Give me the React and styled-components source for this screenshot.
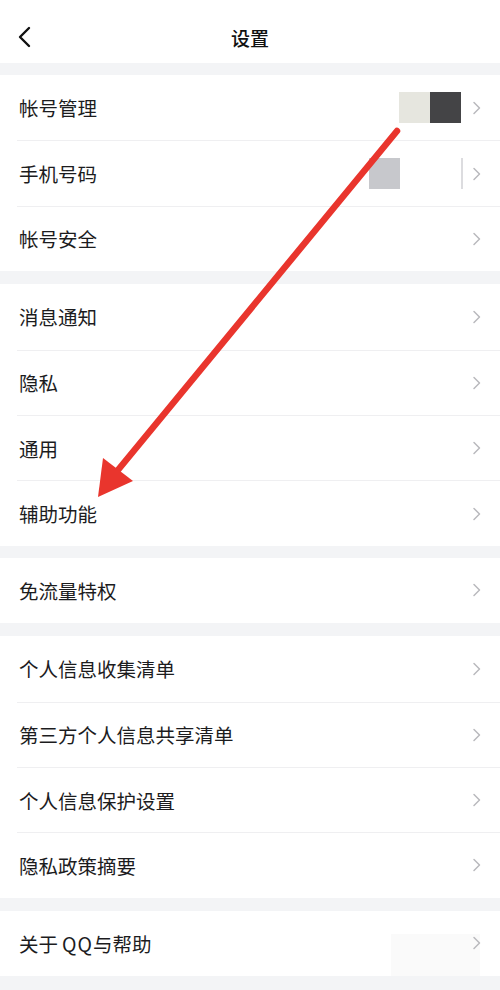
import React from 'react'
import styled, { createGlobalStyle } from 'styled-components'

const Global = createGlobalStyle`
  html, body { margin: 0; padding: 0; background: #f3f4f6; }
  body { font-family: "Noto Sans CJK SC", "Noto Sans", sans-serif; }
  * { box-sizing: border-box; }
`

const Page = styled.div`
  position: relative;
  width: 500px;
  height: 990px;
  overflow: hidden;
  background: #f3f4f6;
  display: flex;
  flex-direction: column;
`

const Header = styled.div`
  height: 63px;
  flex-shrink: 0;
  background: #fff;
  display: flex;
  align-items: center;
  justify-content: center;
  position: relative;
`

const Back = styled.div`
  position: absolute;
  left: 16px;
  top: 26px;
  width: 18px;
  height: 22px;
  display: flex;
`

const Title = styled.div`
  font-size: 19px;
  font-weight: 500;
  color: #111;
  margin-top: 11px;
`

const Group = styled.div`
  background: #fff;
  margin-top: ${p => p.gap || 12}px;
  flex-shrink: 0;
  display: flex;
  flex-direction: column;
`

const Row = styled.div`
  height: 65.4px;
  display: flex;
  align-items: center;
  padding: 0 19px;
  position: relative;
  & + & {
    border-top: 1px solid #efeff1;
  }
  & + &::before {
    content: '';
    position: absolute;
    left: 0;
    top: -1px;
    width: 17px;
    height: 1px;
    background: #fff;
  }
`

const Label = styled.div`
  flex: 1;
  font-size: 19.5px;
  color: #1c1c1e;
`

const Latin = styled.span`
  margin-left: 4px;
  letter-spacing: 1px;
`

const Right = styled.div`
  display: flex;
  align-items: center;
  align-self: stretch;
`

const Mask = styled.div`
  width: ${p => p.w}px;
  height: ${p => p.h || 31}px;
  background: ${p => p.color};
  margin-right: ${p => p.mr || 0}px;
  align-self: ${p => p.self || 'center'};
`

const Bar = styled.div`
  width: 2px;
  height: 31px;
  background: #dcdcdf;
  margin-right: 9px;
`

const Chevron = () => (
  <svg width="10" height="14" viewBox="0 0 10 14" style={{ marginRight: -1 }}>
    <polyline points="2,1.5 7.5,7 2,12.5" fill="none" stroke="#b9b9bd" strokeWidth="1.5" strokeLinecap="round" strokeLinejoin="round" />
  </svg>
)

const ArrowLayer = styled.svg`
  position: absolute;
  left: 0;
  top: 0;
  pointer-events: none;
`

function Item({ label, children }) {
  return (
    <Row>
      <Label>{label}</Label>
      <Right>
        {children}
        <Chevron />
      </Right>
    </Row>
  )
}

export default function App() {
  return (
    <Page>
      <Global />
      <Header>
        <Back>
          <svg width="18" height="22" viewBox="0 0 18 22">
            <polyline points="13,2 4,11 13,20" fill="none" stroke="#111" strokeWidth="2.4" strokeLinecap="round" strokeLinejoin="round" />
          </svg>
        </Back>
        <Title>设置</Title>
      </Header>

      <Group>
        <Item label="帐号管理">
          <Mask w={31} color="#e6e6df" />
          <Mask w={31} color="#444446" mr={11} />
        </Item>
        <Item label="手机号码">
          <Mask w={31} color="#c7c8cc" mr={61} />
          <Bar />
        </Item>
        <Item label="帐号安全" />
      </Group>

      <Group gap={13}>
        <Item label="消息通知" />
        <Item label="隐私" />
        <Item label="通用" />
        <Item label="辅助功能" />
      </Group>

      <Group gap={12}>
        <Item label="免流量特权" />
      </Group>

      <Group gap={13}>
        <Item label="个人信息收集清单" />
        <Item label="第三方个人信息共享清单" />
        <Item label="个人信息保护设置" />
        <Item label="隐私政策摘要" />
      </Group>

      <Group gap={13}>
        <Item label={<>关于<Latin>QQ</Latin>与帮助</>}>
          <Mask w={89} h={42} color="#fafafa" self="flex-end" mr={-8} />
        </Item>
      </Group>

      <ArrowLayer width="500" height="990" viewBox="0 0 500 990">
        <line x1="397" y1="131" x2="118" y2="470" stroke="#e9352d" strokeWidth="6.5" strokeLinecap="round" />
        <polygon points="98,497 103,458 133,481" fill="#e9352d" />
      </ArrowLayer>
    </Page>
  )
}
